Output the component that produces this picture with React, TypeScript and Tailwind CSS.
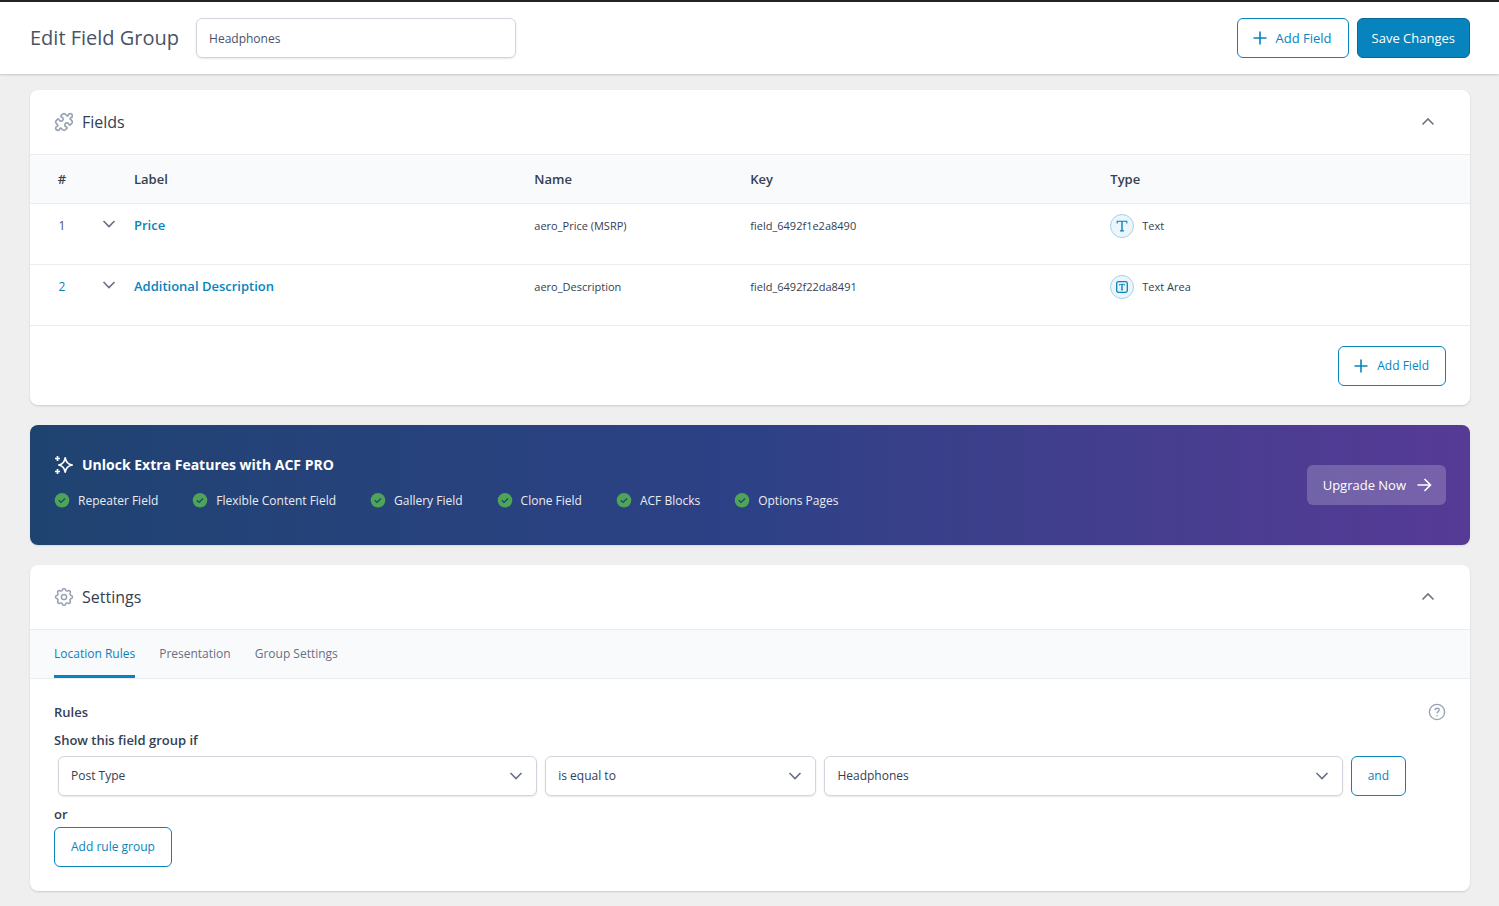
import React from "react";
import { Puzzle } from "lucide-react";

type Kids = { children?: React.ReactNode; className?: string };

function Chevron({ up = false, className = "" }: { up?: boolean; className?: string }) {
  return (
    <svg viewBox="0 0 20 20" className={`h-5 w-5 ${className}`} fill="none" stroke="currentColor" strokeWidth="1.6" aria-hidden="true">
      <path d={up ? "M4.5 12.5 10 7l5.5 5.5" : "M4.5 7 10 12.5 15.5 7"} />
    </svg>
  );
}

function PlusIcon() {
  return (
    <svg viewBox="0 0 20 20" className="h-5 w-5" fill="none" stroke="currentColor" strokeWidth="1.6" aria-hidden="true">
      <path d="M10 3.5v13M3.5 10h13" />
    </svg>
  );
}

// Eight rounded teeth around the hub.
const gearPath =
  Array.from({ length: 96 }, (_, i) => {
    const a = (i / 96) * Math.PI * 2;
    const r = 7.5 + 0.9 * Math.tanh(2 * Math.cos(8 * a));
    return `${i === 0 ? "M" : "L"}${(10 + r * Math.cos(a)).toFixed(2)} ${(10 + r * Math.sin(a)).toFixed(2)}`;
  }).join("") + "Z";

function GearIcon() {
  return (
    <svg viewBox="0 0 20 20" className="h-5 w-5" fill="none" stroke="currentColor" strokeWidth="1.5" strokeLinejoin="round" aria-hidden="true">
      <path d={gearPath} />
      <circle cx="10" cy="10" r="2.6" />
    </svg>
  );
}

function SparkIcon() {
  return (
    <svg viewBox="0 0 20 20" className="h-5 w-5" fill="none" stroke="currentColor" strokeWidth="1.7" aria-hidden="true">
      <path d="M11.2 2.8C11.9 7 13.5 9.2 18.2 10C13.5 10.800 11.900 13 11.200 17.200C10.500 13 9 10.800 4.800 10C9 9.200 10.500 7 11.200 2.800Z" strokeLinejoin="round" />
      <path d="M3.500 1v5M1 3.500h5M3.500 14v5M1 16.500h5" />
    </svg>
  );
}

function CheckIcon() {
  return (
    <svg viewBox="0 0 16 16" className="h-4 w-4 shrink-0" aria-hidden="true">
      <circle cx="8" cy="7.3" r="7.3" fill="#4fa556" />
      <path d="m4.800 7.300 2.200 2.100 4-3.800" fill="none" stroke="#22447a" strokeWidth="1.400" />
    </svg>
  );
}

function TypeIcon({ kind }: { kind: string }) {
  return (
    <span className="flex h-6 w-6 items-center justify-center rounded-full border border-[#a5d2e7] bg-[#ebf5fa] text-[#0783be]">
      {kind === "Text" ? (
        <svg viewBox="0 0 12 12" className="h-3 w-3" fill="none" stroke="currentColor" aria-hidden="true">
          <path d="M1.200 3.500V1.200h9.600v2.300M4 10.900h4" strokeWidth="1.100" />
          <path d="M6 1v10" strokeWidth="1.400" />
        </svg>
      ) : (
        <svg viewBox="0 0 12 12" className="h-3 w-3" fill="none" stroke="currentColor" aria-hidden="true">
          <rect x=".7" y=".7" width="10.600" height="10.600" rx="1.800" strokeWidth="1.300" />
          <path d="M3.500 4.500V3.400h5v1.100M4.800 8.900h2.400" strokeWidth=".9" />
          <path d="M6 3.200v5.500" strokeWidth="1.400" />
        </svg>
      )}
    </span>
  );
}

function OutlineButton({ children, className = "px-4" }: Kids) {
  return (
    <button type="button" className={`flex h-10 items-center justify-center rounded-md border border-[#0783be] bg-white text-[#0783be] ${className}`}>
      {children}
    </button>
  );
}

function Panel({ id, icon, title, children }: Kids & { id: string; icon: React.ReactNode; title: string }) {
  return (
    <section aria-labelledby={id} className="overflow-hidden rounded-lg bg-white shadow-[0_1px_2px_rgba(16,24,40,0.16)]">
      <header className="flex h-16 items-center justify-between pr-8 pl-6">
        <div className="flex items-center gap-2 text-[#98a2b3]">
          {icon}
          <h2 id={id} className="text-base text-[#344054]">{title}</h2>
        </div>
        <button type="button" aria-label={`Collapse ${title}`} className="text-[#6f7480]">
          <Chevron up />
        </button>
      </header>
      {children}
    </section>
  );
}

function RuleSelect({ label, value, className }: { label: string; value: string; className: string }) {
  return (
    <div className={`grid items-center ${className}`}>
      <select aria-label={label} className="col-start-1 row-start-1 h-10 w-full appearance-none rounded-md border border-[#d0d5dd] bg-white px-3 text-[#344054] shadow-[0_1px_2px_rgba(16,24,40,0.1)]">
        <option>{value}</option>
      </select>
      <Chevron className="pointer-events-none col-start-1 row-start-1 mr-[11px] justify-self-end text-[#667085]" />
    </div>
  );
}

const fields = [
  { label: "Price", name: "aero_Price (MSRP)", fieldKey: "field_6492f1e2a8490", type: "Text" },
  { label: "Additional Description", name: "aero_Description", fieldKey: "field_6492f22da8491", type: "Text Area" },
];

const features = ["Repeater Field", "Flexible Content Field", "Gallery Field", "Clone Field", "ACF Blocks", "Options Pages"];

export default function App() {
  return (
    <div className="min-h-screen bg-[#efefef] font-['Open_Sans','Noto_Sans',sans-serif] text-xs leading-5 text-[#344054]">
      <header className="flex items-center justify-between border-t-2 border-[#1d2327] bg-white pr-[29px] pl-[30px] py-4 shadow-[0_1px_2px_rgba(16,24,40,0.2)]">
        <div className="flex items-center gap-[17px]">
          <h1 className="text-xl text-[#475467]">Edit Field Group</h1>
          <input aria-label="Field group title" defaultValue="Headphones" className="h-10 w-80 rounded-md border border-[#d0d5dd] px-3 text-[#475467] shadow-[0_1px_2px_rgba(16,24,40,0.1)]" />
        </div>
        <div className="flex gap-2 text-[13px]">
          <OutlineButton className="gap-1.5 pr-4 pl-3"><PlusIcon />Add Field</OutlineButton>
          <button type="button" className="h-10 rounded-md border border-[#066998] bg-[#0783be] px-3.5 text-white">Save Changes</button>
        </div>
      </header>

      <main className="flex flex-col gap-5 pr-[29px] pl-[30px] py-4">
        <Panel id="fields-title" icon={<Puzzle size={20} strokeWidth={2} />} title="Fields">
          <table className="w-full table-fixed border-collapse text-left">
            <colgroup>
              <col className="w-16" />
              <col className="w-10" />
              <col className="w-[27.8%]" />
              <col className="w-[15%]" />
              <col className="w-[25%]" />
              <col />
            </colgroup>
            <thead>
              <tr className="h-[49px] border-y border-[#eaecf0] bg-[#f9fafb] text-[13px]">
                <th scope="col" className="text-center font-semibold">#</th>
                <td />
                <th scope="col" className="font-semibold">Label</th>
                <th scope="col" className="font-semibold">Name</th>
                <th scope="col" className="font-semibold">Key</th>
                <th scope="col" className="font-semibold">Type</th>
              </tr>
            </thead>
            <tbody>
              {fields.map((f, i) => (
                <tr key={f.fieldKey} className="h-[61px] border-b border-[#eaecf0] align-top text-[11px] leading-6">
                  <td className={i === 0 ? "pt-2.5 text-center text-xs leading-6 text-[#475467]" : "pt-2.5 text-center text-xs leading-6 text-[#0783be]"}>{i + 1}</td>
                  <td className="pt-2.5">
                    <button type="button" aria-label={`Open ${f.label}`} className="ml-[5px] flex text-[#667085]"><Chevron /></button>
                  </td>
                  <td className="pt-2.5"><a href="#field" className="block text-[13px] leading-[22px] font-semibold text-[#0783be]">{f.label}</a></td>
                  <td className="pt-2.5">{f.name}</td>
                  <td className="pt-2.5">{f.fieldKey}</td>
                  <td className="pt-2.5"><span className="flex items-center gap-2"><TypeIcon kind={f.type} />{f.type}</span></td>
                </tr>
              ))}
            </tbody>
          </table>
          <div className="flex justify-end px-6 pt-5 pb-[19px]">
            <OutlineButton className="gap-1.5 pr-4 pl-3"><PlusIcon />Add Field</OutlineButton>
          </div>
        </Panel>

        <section aria-labelledby="pro-title" className="flex h-[120px] items-center justify-between rounded-lg bg-linear-to-r from-[#1f4371] via-[#2d4186] to-[#563a96] px-6 text-white shadow-[0_1px_2px_rgba(16,24,40,0.1)]">
          <div className="flex flex-col gap-4 pb-1">
            <div className="flex items-center gap-2">
              <SparkIcon />
              <h2 id="pro-title" className="text-sm leading-5 font-bold">Unlock Extra Features with ACF PRO</h2>
            </div>
            <ul className="flex gap-[34px] text-[#eaecf0]">
              {features.map((f) => (
                <li key={f} className="flex items-center gap-2"><CheckIcon />{f}</li>
              ))}
            </ul>
          </div>
          <a href="#upgrade" className="flex h-10 items-center gap-2 rounded-md bg-white/20 pr-3 pl-4 text-[13px]">
            Upgrade Now
            <svg viewBox="0 0 20 20" className="h-5 w-5" fill="none" stroke="currentColor" strokeWidth="1.600" aria-hidden="true">
              <path d="M3.500 10h12.500M10.500 4l6 6-6 6" />
            </svg>
          </a>
        </section>

        <Panel id="settings-title" icon={<GearIcon />} title="Settings">
          <nav className="flex h-[50px] gap-6 border-y border-[#eaecf0] bg-[#f9fafb] px-6 text-[#667085]">
            <a href="#location" className="flex items-center border-b-[3px] border-[#0783be] pt-[3px] text-[#0783be]">Location Rules</a>
            <a href="#presentation" className="flex items-center">Presentation</a>
            <a href="#group" className="flex items-center">Group Settings</a>
          </nav>
          <div className="px-6 pt-[23px] pb-6">
            <div className="flex items-center justify-between">
              <h3 className="text-[13px] font-semibold">Rules</h3>
              <button type="button" aria-label="Help" className="text-[#98a2b3]">
                <svg viewBox="0 0 18 18" className="h-[18px] w-[18px]" fill="none" stroke="currentColor" strokeWidth="1.400" aria-hidden="true">
                  <circle cx="9" cy="9" r="7.600" />
                  <path d="M6.900 7.200c.2-1.300 1-1.900 2.200-1.900s2.100.7 2.100 1.800c0 1.500-2.200 1.600-2.200 3.100M9 11.900v1.400" />
                </svg>
              </button>
            </div>
            <h4 className="mt-2 text-[13px] font-semibold">Show this field group if</h4>
            <div className="mt-1.5 mr-10 ml-1 flex gap-2">
              <RuleSelect label="Parameter" value="Post Type" className="flex-[479]" />
              <RuleSelect label="Operator" value="is equal to" className="flex-[271]" />
              <RuleSelect label="Value" value="Headphones" className="flex-[518]" />
              <OutlineButton>and</OutlineButton>
            </div>
            <h4 className="mt-2 mb-[3px] text-[13px] font-semibold">or</h4>
            <OutlineButton>Add rule group</OutlineButton>
          </div>
        </Panel>
      </main>
    </div>
  );
}
